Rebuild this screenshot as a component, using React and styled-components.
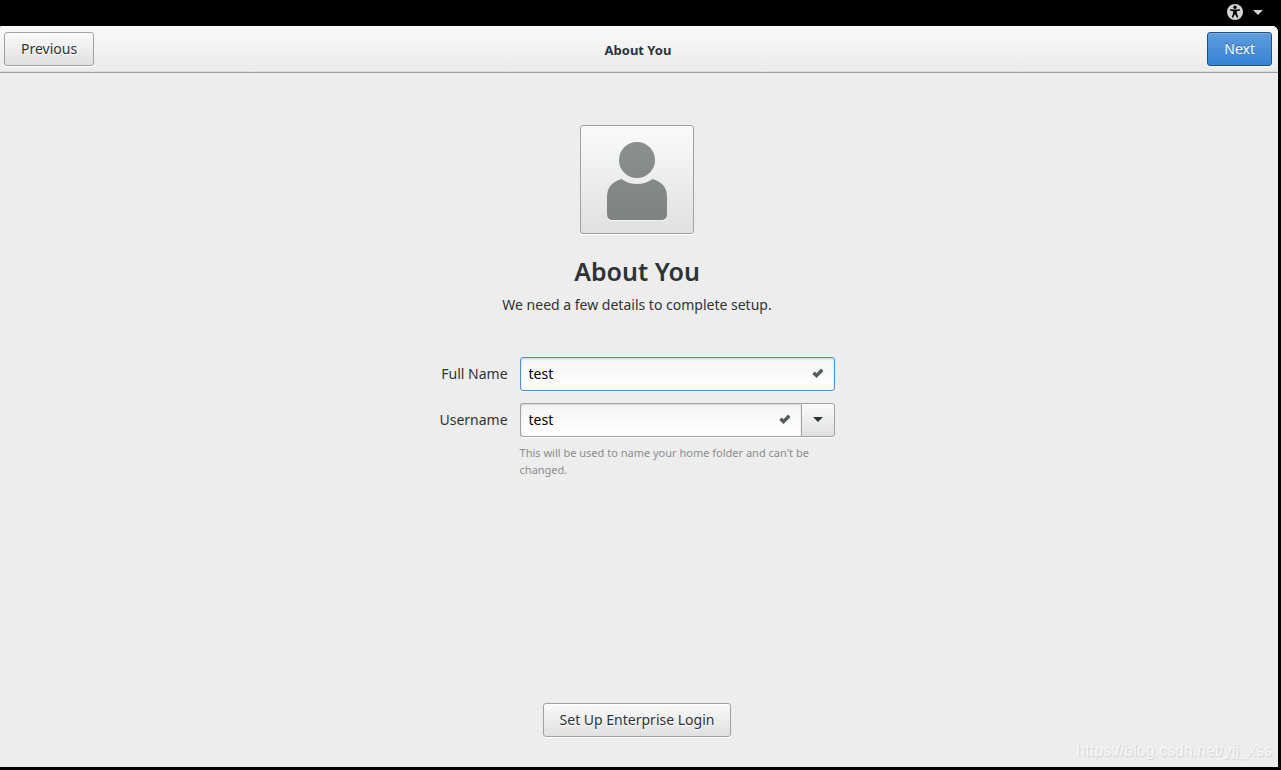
import React, { useState } from 'react';
import styled, { createGlobalStyle, css } from 'styled-components';

function App() {
    const [fullName, setFullName] = useState('test');
    const [username, setUsername] = useState('test');

    return (
        <Screen>
            <GlobalStyle />
            <TopBar>
                <TopBarButton aria-label="Accessibility">
                    <AccessIcon />
                    <ArrowIcon width="10" height="5" />
                </TopBarButton>
            </TopBar>

            <Window>
                <HeaderBar>
                    <Button>Previous</Button>
                    <Title>About You</Title>
                    <NextButton>Next</NextButton>
                </HeaderBar>

                <Page>
                    <AvatarButton aria-label="Choose a picture">
                        <AvatarIcon />
                    </AvatarButton>
                    <Heading>About You</Heading>
                    <Subtitle>We need a few details to complete setup.</Subtitle>

                    <Form onSubmit={(e) => e.preventDefault()}>
                        <Label htmlFor="fullname">Full Name</Label>
                        <Entry $focused>
                            <Input id="fullname" value={fullName} onChange={(e) => setFullName(e.target.value)} />
                            {fullName && <CheckIcon />}
                        </Entry>

                        <Label htmlFor="username">Username</Label>
                        <Combo>
                            <Entry $joined>
                                <Input id="username" value={username} onChange={(e) => setUsername(e.target.value)} />
                                {username && <CheckIcon />}
                            </Entry>
                            <ComboButton type="button" aria-label="Suggestions">
                                <ArrowIcon width="10" height="5" />
                            </ComboButton>
                        </Combo>

                        <Hint>This will be used to name your home folder and can't be changed.</Hint>
                    </Form>

                    <Footer>
                        <Button>Set Up Enterprise Login</Button>
                    </Footer>
                </Page>
            </Window>

            <Watermark>https://blog.csdn.net/yjj_xss</Watermark>
        </Screen>
    )
}

export default App

function AccessIcon() {
    return (
        <svg width="16" height="16" viewBox="0 0 16 16">
            <circle cx="8" cy="8" r="8" fill="#d3d3d3" />
            <circle cx="8" cy="3.3" r="1.7" fill="#000" />
            <path d="M3 5.2 L6.6 5.5 H9.4 L13 5.2 V6.6 L9.8 7.2 V9 L11.3 13.2 L10 13.8 L8 10 L6 13.8 L4.7 13.2 L6.2 9 V7.2 L3 6.6 Z" fill="#000" />
        </svg>
    )
}

function ArrowIcon(props) {
    return (
        <svg {...props} viewBox="0 0 10 5">
            <path d="M0 0 H10 L5 5 Z" fill="currentColor" />
        </svg>
    )
}

function CheckIcon() {
    return (
        <svg width="12" height="10" viewBox="0 0 12 10">
            <path d="M1.5 4.800 L4.500 7.600 L10.300 1.800" fill="none" stroke="#555a5b" strokeWidth="3.400" />
        </svg>
    )
}

function AvatarIcon() {
    return (
        <svg width="60" height="79" viewBox="0 0 60 79">
            <defs>
                <linearGradient id="person" x1="0" y1="0" x2="0" y2="79" gradientUnits="userSpaceOnUse">
                    <stop offset="0" stopColor="#8b8f8f" />
                    <stop offset="1" stopColor="#7e8281" />
                </linearGradient>
            </defs>
            <path d="M14.5 38 Q21 43 30 43 Q39 43 45.5 38 Q60 42 60 57 V73 Q60 79 54 79 H6 Q0 79 0 73 V57 Q0 42 14.5 38 Z" fill="#fff" opacity="0.6" />
            <circle cx="30" cy="18" r="18" fill="url(#person)" />
            <path d="M14.5 37 Q21 42 30 42 Q39 42 45.5 37 Q60 41 60 55 V72 Q60 78 54 78 H6 Q0 78 0 72 V55 Q0 41 14.5 37 Z" fill="url(#person)" />
        </svg>
    )
}

const GlobalStyle = createGlobalStyle`
    * {
        box-sizing: border-box;
    }
    body {
        margin: 0;
        background: #000;
    }
    body, button, input {
        font-family: 'Noto Sans', 'Open Sans', sans-serif;
        font-size: 14px;
        line-height: 20px;
        color: #2e3436;
    }
`

const Screen = styled.div`
    position: relative;
    min-height: 100vh;
    display: flex;
    flex-direction: column;
    padding: 0 3px 3px 0;
`

const TopBar = styled.div`
    height: 26px;
    display: flex;
    justify-content: flex-end;
    align-items: center;
    padding: 0 15px 2px 0;
`

const TopBarButton = styled.button`
    display: flex;
    align-items: center;
    gap: 10px;
    padding: 0;
    border: none;
    background: none;
    color: #d3d3d3;
`

const Window = styled.div`
    flex: 1;
    display: flex;
    flex-direction: column;
    background: #ededed;
    border-radius: 2px 6px 0 0;
    overflow: hidden;
`

const HeaderBar = styled.header`
    display: grid;
    grid-template-columns: 1fr auto 1fr;
    align-items: center;
    padding: 6px 6px 6px 4px;
    background: linear-gradient(#f9f9f9, #ebebeb);
    border-bottom: 1px solid #a1a1a1;
    box-shadow: inset 0 1px #fff, inset 0 -1px #dcdcdc;
`

const Title = styled.div`
    padding-top: 2px;
    font-size: 13px;
    font-weight: bold;
`

const Button = styled.button`
    justify-self: start;
    height: 34px;
    padding: 0 16px;
    border: 1px solid #a1a1a1;
    border-radius: 3px;
    background: linear-gradient(#fafafa, #e0e0e0);
    box-shadow: inset 0 1px #fff, 0 1px #fff;
    text-shadow: 0 1px #fff;
`

const NextButton = styled(Button)`
    justify-self: end;
    border-color: #1c5187;
    background: linear-gradient(#5f9ddd, #3583d5);
    box-shadow: inset 0 1px #78aee6, 0 1px #fff;
    text-shadow: 0 -1px #2a639d;
    color: white;
`

const Page = styled.main`
    flex: 1;
    display: flex;
    flex-direction: column;
    align-items: center;
    padding: 52px 4px 30px 0;
`

const AvatarButton = styled(Button)`
    align-self: center;
    display: flex;
    justify-content: center;
    align-items: center;
    width: 114px;
    height: 109px;
    padding: 4px 0 0;
`

const Heading = styled.h1`
    margin: 20px 0 0;
    font-size: 25px;
    font-weight: 600;
    line-height: 34px;
`

const Subtitle = styled.p`
    margin: 7px 0 0;
`

const Form = styled.form`
    display: grid;
    grid-template-columns: auto 315px;
    column-gap: 12px;
    row-gap: 12px;
    align-items: center;
    margin-top: 42px;
`

const Label = styled.label`
    text-align: right;
`

const Entry = styled.div`
    flex: 1;
    display: flex;
    align-items: center;
    height: 34px;
    padding: 0 10px 2px 8px;
    border: 1px solid ${props => props.$focused ? '#4a90d9' : '#a1a1a1'};
    border-radius: 3px;
    background: linear-gradient(#f5f5f5, #fff);
    box-shadow: inset 0 1px 2px ${props => props.$focused ? '#c3d3e4' : '#d4d4d4'}, 0 1px #fff;
    ${props => props.$joined && css`
        border-right: none;
        border-radius: 3px 0 0 3px;
    `}
`

const Input = styled.input`
    flex: 1;
    min-width: 0;
    padding: 2px 0 0;
    border: none;
    outline: none;
    background: none;
    color: #000;
`

const Combo = styled.div`
    display: flex;
`

const ComboButton = styled(Button)`
    display: flex;
    justify-content: center;
    align-items: center;
    width: 34px;
    padding: 0 0 2px;
    border-radius: 0 3px 3px 0;
`

const Hint = styled.p`
    grid-column: 2;
    margin: -5px 0 0;
    font-size: 11px;
    line-height: 17px;
    color: #8b8e8f;
`

const Footer = styled.footer`
    margin-top: auto;
`

const Watermark = styled.div`
    position: absolute;
    right: 9px;
    bottom: 9px;
    font-family: 'Liberation Sans', Arial, sans-serif;
    font-size: 16px;
    color: #f6f6f6;
    text-shadow: 1px 1px 1px #d0d0d0;
`
